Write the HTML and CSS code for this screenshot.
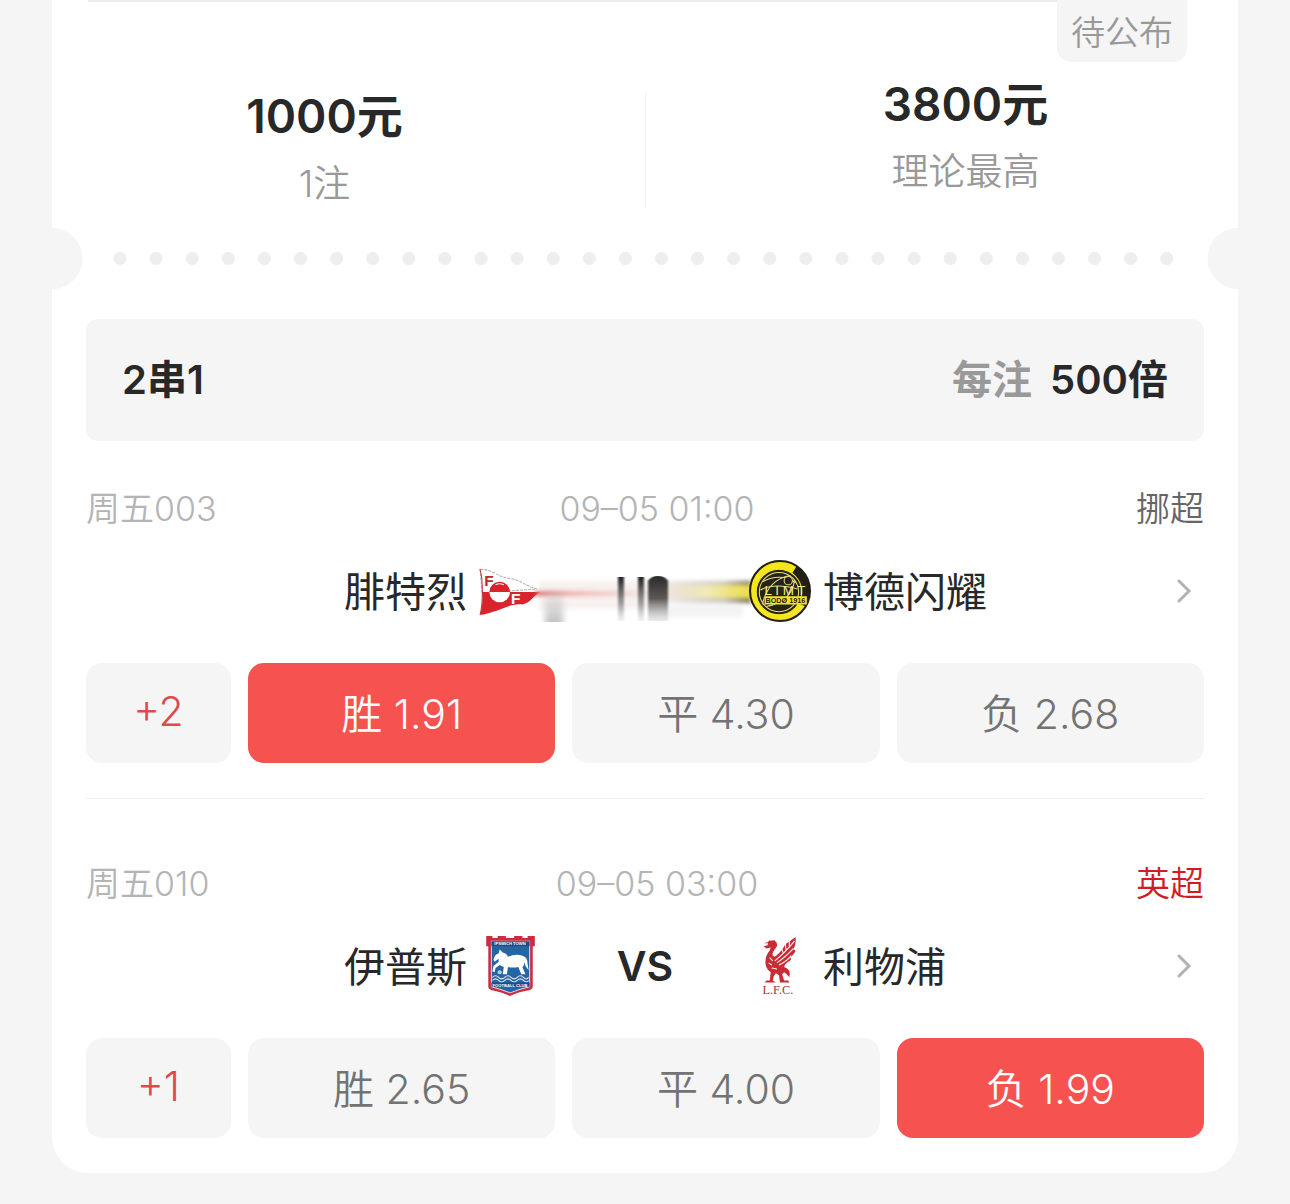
FILE: index.html
```html
<!DOCTYPE html>
<html lang="zh-CN">
<head>
  <meta charset="UTF-8" />
  <meta name="viewport" content="width=device-width, initial-scale=1" />
  <title>投注详情</title>
  <link rel="stylesheet" href="styles.css">
</head>
<body>
  <main class="ticket">
    <section class="summary">
      <div class="summary-item">
        <strong class="amount">1000元</strong>
        <span class="caption">1注</span>
      </div>
      <div class="summary-item prize">
        <strong class="amount">3800元</strong>
        <span class="caption">理论最高</span>
      </div>
      <span class="badge">待公布</span>
    </section>

    <div class="perforation"><div class="dots"></div></div>

    <div class="ticket-body">
      <div class="pass-bar">
        <span>2串1</span>
        <span class="multiple"><span class="muted">每注</span>500倍</span>
      </div>

      <section class="match">
        <div class="match-info">
          <span>周五003</span>
          <time class="kickoff">09–05 01:00</time>
          <span class="league">挪超</span>
        </div>
        <div class="teams">
          <div class="team home">
            <span class="team-name">腓特烈</span>
            <svg class="crest" viewBox="0 0 60 60" aria-hidden="true">
              <path d="M1 9 C14 9 18 17 31 18 C39 19 45 25 56 28 L3 32 Z" fill="#fff" stroke="#b9a9ad" stroke-dasharray="3 1"/>
              <path d="M3 31 L60 31 C51 35 51 41 42 43 C31 42 25 47 17 49 C10 51 6 53 1 53 C3 46 4 38 3 31 Z" fill="#d8242b"/>
              <path d="M1 9 C4 19 4 42 1 53" fill="none" stroke="#bc3740"/>
              <circle cx="20" cy="31" r="10" fill="#fff"/>
              <path d="M10 31 A10 10 0 0 1 30 31 Z" fill="#d8242b"/>
              <path d="M16 24 Q20 22 24 24" stroke="#fff" fill="none"/>
              <text x="5" y="25" class="flag-letter red">F</text>
              <text x="31" y="43" class="flag-letter">F</text>
            </svg>
          </div>
          <div class="versus">
            <svg class="streak" viewBox="0 0 208 64" aria-hidden="true">
              <defs>
                <linearGradient id="redFade"><stop offset="0" stop-color="#db5252"/><stop offset=".3" stop-color="#edaaa6"/><stop offset="1" stop-color="#f3d3ce" stop-opacity=".5"/></linearGradient>
                <linearGradient id="yellowFade"><stop offset="0" stop-color="#eee2d8" stop-opacity=".6"/><stop offset=".5" stop-color="#f2eab4"/><stop offset="1" stop-color="#ebdd3c"/></linearGradient>
                <linearGradient id="shadeFade"><stop offset="0" stop-color="#c7c2be" stop-opacity=".3"/><stop offset=".7" stop-color="#c8c2ba"/><stop offset="1" stop-color="#6a624a"/></linearGradient>
                <linearGradient id="barFade" x2="0" y2="1"><stop offset="0" stop-color="#222"/><stop offset=".15" stop-color="#444"/><stop offset=".6" stop-color="#888" stop-opacity=".8"/><stop offset="1" stop-color="#bbb" stop-opacity=".2"/></linearGradient>
                <linearGradient id="slabFade" x2="0" y2="1"><stop offset="0" stop-color="#2a2a2a"/><stop offset=".5" stop-color="#5c5855"/><stop offset="1" stop-color="#bbb" stop-opacity=".3"/></linearGradient>
                <linearGradient id="blockFade" x2="0" y2="1"><stop offset="0" stop-color="#bbb" stop-opacity="0"/><stop offset="1" stop-color="#c4c4c4"/></linearGradient>
                <filter id="soft" x="-20%" y="-50%" width="140%" height="200%"><feGaussianBlur stdDeviation="2"/></filter>
                <filter id="softBlock" x="-50%" y="-10%" width="200%" height="120%"><feGaussianBlur stdDeviation="3 0"/></filter>
                <filter id="softEdge" x="-50%" y="-10%" width="200%" height="120%"><feGaussianBlur stdDeviation="1 0"/></filter>
              </defs>
              <g filter="url(#soft)">
                <rect x="-2" y="22" width="110" height="28" fill="#f7f1ef"/>
                <rect x="-6" y="32" width="116" height="5" fill="url(#redFade)"/>
                <rect x="122" y="22" width="88" height="22" fill="url(#shadeFade)"/>
                <rect x="122" y="26" width="90" height="13" fill="url(#yellowFade)"/>
                <rect x="126" y="46" width="76" height="12" fill="#eee" opacity=".7"/>
              </g>
              <rect x="4" y="28" width="18" height="35" fill="url(#blockFade)" filter="url(#softBlock)"/>
              <g filter="url(#softEdge)">
                <rect x="77" y="18" width="6" height="44" fill="url(#barFade)"/>
                <rect x="97" y="18" width="6" height="44" fill="url(#barFade)"/>
                <path d="M107 62 V22 Q110 17 117 17 Q124 17 127 22 V62 Z" fill="url(#slabFade)"/>
              </g>
            </svg>
          </div>
          <div class="team">
            <svg class="crest" viewBox="0 0 60 60" aria-hidden="true">
              <circle cx="30" cy="30" r="29" fill="#f4e51c" stroke="#211f16" stroke-width="2"/>
              <path d="M46 6 A29 29 0 0 1 55 45 L48 42 A23 23 0 0 0 41 14 Z" fill="#211f16"/>
              <circle cx="29" cy="31" r="22" fill="#26231a" stroke="#f4e51c"/>
              <g fill="none" stroke="#e9df7a">
                <circle cx="29" cy="31" r="19"/>
                <path d="M13 21 Q31 12 45 22 M13 43 Q18 19 40 15 M17 45 Q42 40 44 19 M11 29 Q24 22 47 28"/>
                <circle cx="38" cy="20" r="4" fill="#26231a"/>
              </g>
              <text x="15" y="34" class="crest-name">L I M T</text>
              <path d="M15 35 H56 V43 H15 Z" fill="#f4e51c"/>
              <text x="16" y="42" class="crest-year">BODØ 1916</text>
            </svg>
            <span class="team-name">博德闪耀</span>
            <a class="more" href="#" aria-label="比赛详情"><svg viewBox="0 0 16 28"><path d="M3 4 L13 14 L3 24"/></svg></a>
          </div>
        </div>
        <div class="odds">
          <button type="button" class="handicap">+2</button>
          <button type="button" class="picked">胜 1.91</button>
          <button type="button">平 4.30</button>
          <button type="button">负 2.68</button>
        </div>
      </section>

      <section class="match">
        <div class="match-info">
          <span>周五010</span>
          <time class="kickoff">09–05 03:00</time>
          <span class="league premier">英超</span>
        </div>
        <div class="teams">
          <div class="team home">
            <span class="team-name">伊普斯</span>
            <svg class="crest" viewBox="0 0 60 60" aria-hidden="true">
              <path d="M7 1 H13 V3 H18 V1 H26 V3 H34 V1 H42 V3 H47 V1 H54 V11 H52 V50 Q52 53 46 54 Q36 56 30 59 Q24 56 15 54 Q9 53 9 50 V11 H7 Z" fill="#c92c43"/>
              <path d="M12 6 H49 V50 Q40 52 30 56 Q20 52 12 50 Z" fill="#2465a4" stroke="#edd3da"/>
              <path d="M12 6 H49 V11 H12 Z" fill="#244b86"/>
              <text x="30" y="10" class="ipswich-name">IPSWICH TOWN</text>
              <path d="M14 24 Q15 19 19 18 L20 14 L23 17 Q27 18 28 21 Q35 18 42 20 Q47 21 47 28 L48 34 L45 30 L44 26 Q44 30 42 31 L45 38 H41 L38 31 Q33 32 28 31 L27 38 H23 L24 31 L20 29 L16 32 L15 36 L13 35 L14 30 L19 26 L19 23 L15 26 Z" fill="#fff"/>
              <circle cx="20" cy="36" r="2" fill="#b9d3e7"/>
              <path d="M13 41 Q16 38 19 41 T25 41 T31 41 T37 41 T43 41 T48 41 M13 44 Q16 41 19 44 T25 44 T31 44 T37 44 T43 44 T48 44" fill="none" stroke="#e5edf5" stroke-width="1"/>
              <path d="M12 46 H49 V50 H12 Z" fill="#244b86"/>
              <text x="30" y="50" class="ipswich-name">FOOTBALL CLUB</text>
            </svg>
          </div>
          <strong class="versus">VS</strong>
          <div class="team">
            <svg class="crest" viewBox="0 0 60 60" aria-hidden="true">
              <g fill="#c92c35">
                <path d="M14 11 L18 10 Q18 6 23 5 Q28 6 27 11 Q25 14 23 17 Q22 21 25 21 Q32 16 35 9 Q40 6 45 2 Q46 8 43 14 Q45 14 45 16 Q42 20 40 22 Q42 24 38 26 Q34 29 34 31 Q41 33 39 41 Q36 37 34 36 L32 38 L34 44 H38 L39 46 H30 L29 39 L26 37 L24 40 L23 44 L26 46 H15 L17 44 H20 L21 36 Q15 32 16 25 Q16 20 20 15 L21 12 L17 13 Z"/>
                <path d="M14 8 L18 7 L20 5 L22 6 L25 5 L25 8 Z"/>
              </g>
              <path d="M25 25 Q34 18 44 6 M27 27 Q37 20 43 13 M29 29 Q36 26 41 20 M31 12 L33 17 M35 8 L36 15 M39 5 L39 12 M20 22 L23 25 M19 27 L22 29 M22 32 L27 33" fill="none" stroke="#fff" stroke-width="1"/>
              <text x="28" y="57" class="liverpool-name">L.F.C.</text>
            </svg>
            <span class="team-name">利物浦</span>
            <a class="more" href="#" aria-label="比赛详情"><svg viewBox="0 0 16 28"><path d="M3 4 L13 14 L3 24"/></svg></a>
          </div>
        </div>
        <div class="odds">
          <button type="button" class="handicap">+1</button>
          <button type="button">胜 2.65</button>
          <button type="button">平 4.00</button>
          <button type="button" class="picked">负 1.99</button>
        </div>
      </section>
    </div>
  </main>
</body>
</html>
```
FILE: styles.css
```css
* {
  box-sizing: border-box;
}

body {
  margin: 0;
  background: #f5f5f5;
  color: #282828;
  font-family: Inter, "Noto Sans CJK SC", sans-serif;
}

.ticket {
  margin: 0 52px 32px;
  background: #fff;
  border-radius: 0 0 36px 36px;
  overflow: hidden;
}

/* stake and prize */
.summary {
  position: relative;
  display: grid;
  grid-template-columns: 1fr 1fr;
  height: 228px;
}

.summary::before {
  content: "";
  position: absolute;
  top: 0;
  left: 36px;
  right: 52px;
  height: 2px;
  background: #ececec;
}

.summary::after {
  content: "";
  position: absolute;
  top: 92px;
  left: 50%;
  width: 1px;
  height: 116px;
  background: #f3f3f3;
}

.summary-item {
  display: flex;
  flex-direction: column;
  align-items: center;
  gap: 12px;
  padding: 88px 48px 0 0;
}

.summary-item.prize {
  padding: 76px 0 0 48px;
}

.amount {
  font-size: 46px;
  font-weight: 600;
  line-height: 56px;
}

.caption {
  color: #999;
  font-size: 37px;
  font-weight: 350;
  line-height: 56px;
}

.badge {
  position: absolute;
  top: 0;
  right: 51px;
  padding: 9px 14px 5px;
  border-radius: 0 0 14px 14px;
  background: #f5f5f5;
  color: #999;
  font-size: 34px;
  font-weight: 350;
  line-height: 48px;
}

/* tear line with a notch at each side */
.perforation {
  height: 61px;
  padding: 0 53px 0 50px;
  background:
    radial-gradient(circle at 0 50%, #f5f5f5 30px, transparent 31px),
    radial-gradient(circle at 100% 50%, #f5f5f5 30px, transparent 31px);
}

.dots {
  height: 100%;
  background: radial-gradient(circle, #eee 6px, transparent 7px) 0 50% / 36px 100% round;
}

.ticket-body {
  padding: 30px 34px 0;
}

.pass-bar {
  display: flex;
  align-items: center;
  justify-content: space-between;
  padding: 32px 36px;
  border-radius: 12px;
  background: #f5f5f5;
  font-size: 40px;
  font-weight: 600;
  line-height: 58px;
}

.multiple {
  display: flex;
  gap: 18px;
}

.muted {
  color: #999;
}

/* matches */
.match {
  padding: 44px 0 35px;
}

.match + .match {
  padding-top: 61px;
  border-top: 1px solid #eee;
}

.match-info {
  display: grid;
  grid-template-columns: 1fr auto 1fr;
  color: #b4b4b4;
  font-size: 34px;
  font-weight: 350;
  line-height: 48px;
}

.kickoff {
  padding-left: 24px;
}

.league {
  color: #666;
  text-align: right;
}

.league.premier {
  color: #d01c24;
}

.teams {
  display: grid;
  grid-template-columns: 1fr 208px 1fr;
  align-items: center;
  height: 64px;
  margin: 26px 0 40px;
  font-size: 41px;
}

.team {
  display: flex;
  align-items: center;
  gap: 12px;
}

.team.home {
  justify-content: flex-end;
}

.team-name {
  padding-bottom: 4px;
}

.crest {
  width: 62px;
  height: 62px;
}

.versus {
  text-align: center;
  font-weight: 600;
}

.streak {
  display: block;
  width: 100%;
  overflow: visible;
}

.more {
  display: flex;
  margin: 0 12px 0 auto;
}

.more svg {
  width: 16px;
  height: 28px;
  fill: none;
  stroke: #b2b2b2;
  stroke-width: 3;
  stroke-linecap: round;
}

.odds {
  display: grid;
  grid-template-columns: 145px repeat(3, 1fr);
  gap: 17px;
}

.odds button {
  height: 100px;
  padding: 0 0 5px;
  border: 0;
  border-radius: 16px;
  background: #f5f5f5;
  color: #737373;
  font-family: inherit;
  font-size: 41px;
  font-weight: 350;
}

.odds .handicap {
  color: #e0484c;
}

.odds .picked {
  background: #f65350;
  color: #fff;
}

/* lettering inside the crests */
.flag-letter {
  fill: #fff;
  font: bold 15px "Liberation Sans", sans-serif;
}

.flag-letter.red {
  fill: #b92a35;
}

.crest-name {
  fill: #f4e98a;
  font: 13px "Liberation Sans", sans-serif;
}

.crest-year {
  fill: #26231a;
  font: bold 7px "Liberation Sans", sans-serif;
}

.ipswich-name {
  fill: #fff;
  font: bold 4px "Liberation Sans", sans-serif;
  text-anchor: middle;
}

.liverpool-name {
  fill: #a8333a;
  font: 12px "Liberation Serif", serif;
  text-anchor: middle;
}
```
